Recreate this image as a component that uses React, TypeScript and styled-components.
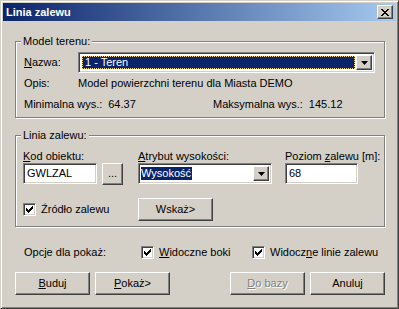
import React from "react";
import styled, { createGlobalStyle, css } from "styled-components";

const face = "#D4D0C8";

const GlobalStyle = createGlobalStyle`
  html, body {
    margin: 0;
    padding: 0;
    background: ${face};
  }
  body {
    font-family: "Liberation Sans", Arial, sans-serif;
    font-size: 11px;
    color: #000;
  }
  * { box-sizing: border-box; }
`;

const raised = css`
  border: 1px solid;
  border-color: #fff #404040 #404040 #fff;
  box-shadow: inset -1px -1px #808080, inset 1px 1px ${face};
  background: ${face};
`;

const sunken = css`
  border: 1px solid;
  border-color: #808080 #fff #fff #808080;
  box-shadow: inset 1px 1px #404040, inset -1px -1px ${face};
`;

const Window = styled.div`
  width: 399px;
  height: 309px;
  border: 1px solid;
  border-color: ${face} #404040 #404040 ${face};
  box-shadow: inset 1px 1px #fff, inset -1px -1px #808080;
  padding: 2px;
  background: ${face};
  display: flex;
  flex-direction: column;
`;

const TitleBar = styled.div`
  height: 18px;
  flex: none;
  background: linear-gradient(to right, #0a246a, #a6caf0);
  display: flex;
  align-items: center;
  justify-content: space-between;
  padding: 0 3px 0 3px;
  color: #fff;
  font-weight: bold;
  font-size: 11px;
`;

const CloseButton = styled.div`
  ${raised};
  width: 16px;
  height: 14px;
  display: flex;
  align-items: center;
  justify-content: center;
`;

const Client = styled.div`
  flex: 1;
  display: flex;
  flex-direction: column;
  padding: 20px 11px 0 12px;
`;

const GroupBox = styled.div<{ $top?: number; $padLeft: number; $padTop: number; $padBottom: number }>`
  position: relative;
  margin-top: ${({ $top }) => $top ?? 0}px;
  border: 1px solid #808080;
  box-shadow: inset 1px 1px #fff, 1px 1px #fff;
  padding: ${({ $padTop, $padBottom, $padLeft }) => `${$padTop}px 8px ${$padBottom}px ${$padLeft}px`};
`;

const Legend = styled.div`
  position: absolute;
  top: -7px;
  left: 5px;
  padding: 0 2px;
  line-height: 13px;
  background: ${face};
`;

const Row = styled.div<{ $h?: number }>`
  display: flex;
  align-items: center;
  height: ${({ $h }) => $h ?? 21}px;
`;

const Label = styled.span<{ $w?: number }>`
  flex: none;
  width: ${({ $w }) => ($w ? `${$w}px` : "auto")};
  white-space: nowrap;
  line-height: 13px;
`;

const Value = styled.span`
  margin-left: 6px;
`;

const Key = styled.span`
  text-decoration: underline;
`;

const Combo = styled.div<{ $w: number }>`
  ${sunken};
  width: ${({ $w }) => $w}px;
  height: 21px;
  background: #fff;
  padding: 2px;
  display: flex;
  align-items: stretch;
`;

const ComboText = styled.div<{ $fill?: boolean }>`
  flex: 1;
  display: flex;
  align-items: center;
  padding: ${({ $fill }) => ($fill ? "1px" : "0")};
`;

const Selection = styled.span<{ $fill?: boolean }>`
  background: #0a246a;
  color: #fff;
  line-height: 13px;
  padding: ${({ $fill }) => ($fill ? "0 2px" : "0 1px 0 0")};
  ${({ $fill }) =>
    $fill &&
    css`
      flex: 1;
      align-self: stretch;
      display: flex;
      align-items: center;
      border: 1px dotted #f5db95;
    `}
`;

const DropButton = styled.div`
  ${raised};
  width: 16px;
  flex: none;
  display: flex;
  align-items: center;
  justify-content: center;
`;

const Field = styled.div<{ $w: number; $gap?: number }>`
  width: ${({ $w }) => $w}px;
  margin-right: ${({ $gap }) => $gap ?? 0}px;
  display: flex;
  flex-direction: column;
`;

const FieldLabel = styled.div`
  height: 13px;
  line-height: 13px;
  white-space: nowrap;
`;

const FieldControls = styled.div`
  display: flex;
  align-items: center;
  gap: 5px;
  height: 21px;
`;

const TextInput = styled.div<{ $w: number }>`
  ${sunken};
  width: ${({ $w }) => $w}px;
  height: 21px;
  background: #fff;
  padding: 0 3px;
  display: flex;
  align-items: center;
  line-height: 13px;
`;

const Button = styled.div<{ $w?: number; $h?: number; $disabled?: boolean }>`
  ${raised};
  width: ${({ $w }) => $w ?? 75}px;
  height: ${({ $h }) => $h ?? 23}px;
  flex: none;
  display: flex;
  align-items: center;
  justify-content: center;
  line-height: 13px;
  color: ${({ $disabled }) => ($disabled ? "#808080" : "#000")};
  text-shadow: ${({ $disabled }) => ($disabled ? "1px 1px #fff" : "none")};
`;

const CheckItem = styled.div<{ $w?: number }>`
  display: flex;
  align-items: center;
  gap: 5px;
  width: ${({ $w }) => ($w ? `${$w}px` : "auto")};
  flex: none;
  white-space: nowrap;
  line-height: 13px;
`;

const CheckBox = styled.div`
  ${sunken};
  width: 13px;
  height: 13px;
  background: #fff;
  padding: 2px;
  display: flex;
`;

const OptionsRow = styled.div`
  display: flex;
  align-items: center;
  height: 17px;
  margin-top: 17px;
  padding-left: 9px;
`;

const ButtonBar = styled.div`
  display: flex;
  justify-content: space-between;
  margin-top: 11px;
`;

const ButtonGroup = styled.div`
  display: flex;
  gap: 5px;
`;

const Arrow = () => (
  <svg width="7" height="4" viewBox="0 0 7 4">
    <path d="M0 0h7L3.5 4z" fill="#000" />
  </svg>
);

const Check = () => (
  <svg width="7" height="7" viewBox="0 0 7 7" style={{ margin: "auto" }}>
    <path d="M0 2h1v1h1v1h1V3h1V2h1V1h1V0h1v3H6v1H5v1H4v1H3v1H2V6H1V5H0z" fill="#000" />
  </svg>
);

const CloseIcon = () => (
  <svg width="8" height="7" viewBox="0 0 8 7">
    <path
      d="M0 0h2v1h1v1h2V1h1V0h2v1H7v1H6v1H5v1h1v1h1v1h1v1H6V6H5V5H3v1H2v1H0V6h1V5h1V4h1V3H2V2H1V1H0z"
      fill="#000"
    />
  </svg>
);

function CheckLabel({ w, children }: { w?: number; children: React.ReactNode }) {
  return (
    <CheckItem $w={w}>
      <CheckBox>
        <Check />
      </CheckBox>
      <span>{children}</span>
    </CheckItem>
  );
}

export default function App() {
  return (
    <>
      <GlobalStyle />
      <Window>
        <TitleBar>
          <span>Linia zalewu</span>
          <CloseButton>
            <CloseIcon />
          </CloseButton>
        </TitleBar>

        <Client>
          <GroupBox $padTop={10} $padBottom={2} $padLeft={8}>
            <Legend>Model terenu:</Legend>
            <Row>
              <Label $w={54}>
                <Key>N</Key>azwa:
              </Label>
              <Combo $w={297}>
                <ComboText $fill>
                  <Selection $fill>1 - Teren</Selection>
                </ComboText>
                <DropButton>
                  <Arrow />
                </DropButton>
              </Combo>
            </Row>
            <Row>
              <Label $w={54}>Opis:</Label>
              <Label>Model powierzchni terenu dla Miasta DEMO</Label>
            </Row>
            <Row>
              <Label $w={189}>
                Minimalna wys.:<Value>64.37</Value>
              </Label>
              <Label>
                Maksymalna wys.:<Value>145.12</Value>
              </Label>
            </Row>
          </GroupBox>

          <GroupBox $top={17} $padTop={14} $padBottom={5} $padLeft={7}>
            <Legend>Linia zalewu:</Legend>
            <Row $h={34} style={{ alignItems: "flex-start" }}>
              <Field $w={100} $gap={15}>
                <FieldLabel>
                  <Key>K</Key>od obiektu:
                </FieldLabel>
                <FieldControls>
                  <TextInput $w={74}>GWLZAL</TextInput>
                  <Button $w={21} $h={22}>
                    ...
                  </Button>
                </FieldControls>
              </Field>
              <Field $w={134} $gap={13}>
                <FieldLabel>
                  <Key>A</Key>trybut wysokości:
                </FieldLabel>
                <FieldControls>
                  <Combo $w={134}>
                    <ComboText>
                      <Selection>Wysokość</Selection>
                    </ComboText>
                    <DropButton>
                      <Arrow />
                    </DropButton>
                  </Combo>
                </FieldControls>
              </Field>
              <Field $w={73}>
                <FieldLabel>
                  Poziom <Key>z</Key>alewu [m]:
                </FieldLabel>
                <FieldControls>
                  <TextInput $w={73}>68</TextInput>
                </FieldControls>
              </Field>
            </Row>
            <Row $h={23} style={{ marginTop: 14 }}>
              <CheckLabel w={115}>Źródło zalewu</CheckLabel>
              <Button>Wskaż&gt;</Button>
            </Row>
          </GroupBox>

          <OptionsRow>
            <Label $w={117}>Opcje dla pokaż:</Label>
            <CheckLabel w={111}>
              <Key>W</Key>idoczne boki
            </CheckLabel>
            <CheckLabel>
              Widocz<Key>n</Key>e linie zalewu
            </CheckLabel>
          </OptionsRow>

          <ButtonBar>
            <ButtonGroup>
              <Button>
                <span>
                  <Key>B</Key>uduj
                </span>
              </Button>
              <Button>
                <span>
                  <Key>P</Key>okaż&gt;
                </span>
              </Button>
            </ButtonGroup>
            <ButtonGroup>
              <Button $disabled>
                <span>
                  <Key>D</Key>o bazy
                </span>
              </Button>
              <Button>Anuluj</Button>
            </ButtonGroup>
          </ButtonBar>
        </Client>
      </Window>
    </>
  );
}
